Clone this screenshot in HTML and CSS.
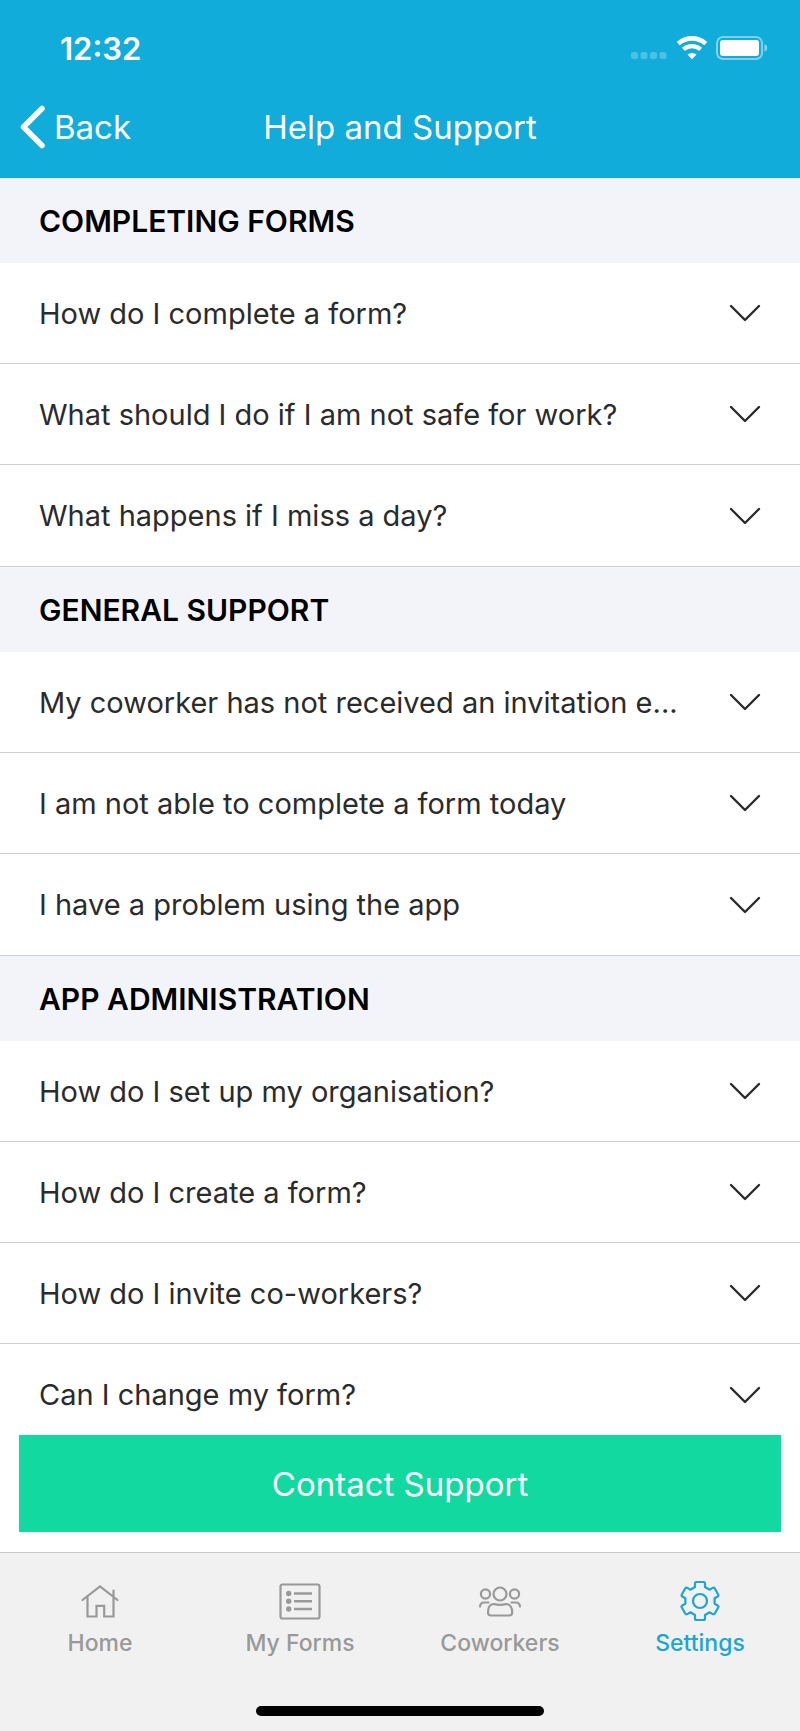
FILE: index.html
```html
<!DOCTYPE html>
<html lang="en">
<head>
<meta charset="utf-8">
<meta name="viewport" content="width=device-width, initial-scale=1">
<title>Help and Support</title>
<link rel="stylesheet" href="styles.css">
</head>
<body class="app">
<svg class="sprite" aria-hidden="true">
  <symbol id="chevron" viewBox="0 0 32 18"><path d="M2 2l14 14L30 2" fill="none" stroke="currentColor" stroke-width="2.400" stroke-linecap="round" stroke-linejoin="round"/></symbol>
</svg>
<header class="top">
  <div class="status">
    <span class="time">12:32</span>
    <div class="indicators">
      <svg class="cell" viewBox="0 0 38 24" fill="#fff" fill-opacity=".25"><rect x="1" y="16" width="7" height="7" rx="2"/><rect x="10.500" y="16" width="7" height="7" rx="2"/><rect x="20" y="16" width="7" height="7" rx="2"/><rect x="29.500" y="16" width="7" height="7" rx="2"/></svg>
      <svg class="wifi" viewBox="0 0 32 24" fill="none" stroke="#fff"><path d="M2.300 7.600a20.500 20.500 0 0 1 27.400 0" stroke-width="4.600"/><path d="M7.400 13.400a13 13 0 0 1 17.200 0" stroke-width="4.200"/><path d="M11.500 18.600a6.800 6.800 0 0 1 9 0L16 23.300z" fill="#fff" stroke="none"/></svg>
      <svg class="battery" viewBox="0 0 52 24"><rect x="1" y="1" width="45" height="22" rx="6" fill="none" stroke="#fff" stroke-opacity=".45" stroke-width="2"/><rect x="4" y="4" width="39" height="16" rx="3" fill="#fff"/><path d="M48.500 8a4.300 4.300 0 0 1 0 8z" fill="#fff" fill-opacity=".5"/></svg>
    </div>
  </div>
  <div class="navbar">
    <button class="back" type="button"><svg class="back-icon" viewBox="0 0 26 44"><path d="M22 3.500L3.500 22 22 40.500" fill="none" stroke="#fff" stroke-width="5.500" stroke-linecap="round" stroke-linejoin="round"/></svg>Back</button>
    <h1 class="title">Help and Support</h1>
  </div>
</header>
<main class="faq">
  <section class="group">
    <h2 class="group-title">COMPLETING FORMS</h2>
    <button class="row" type="button"><span class="question">How do I complete a form?</span><svg class="chevron"><use href="#chevron"/></svg></button>
    <button class="row" type="button"><span class="question">What should I do if I am not safe for work?</span><svg class="chevron"><use href="#chevron"/></svg></button>
    <button class="row" type="button"><span class="question">What happens if I miss a day?</span><svg class="chevron"><use href="#chevron"/></svg></button>
  </section>
  <section class="group">
    <h2 class="group-title">GENERAL SUPPORT</h2>
    <button class="row" type="button"><span class="question">My coworker has not received an invitation e...</span><svg class="chevron"><use href="#chevron"/></svg></button>
    <button class="row" type="button"><span class="question">I am not able to complete a form today</span><svg class="chevron"><use href="#chevron"/></svg></button>
    <button class="row" type="button"><span class="question">I have a problem using the app</span><svg class="chevron"><use href="#chevron"/></svg></button>
  </section>
  <section class="group">
    <h2 class="group-title">APP ADMINISTRATION</h2>
    <button class="row" type="button"><span class="question">How do I set up my organisation?</span><svg class="chevron"><use href="#chevron"/></svg></button>
    <button class="row" type="button"><span class="question">How do I create a form?</span><svg class="chevron"><use href="#chevron"/></svg></button>
    <button class="row" type="button"><span class="question">How do I invite co-workers?</span><svg class="chevron"><use href="#chevron"/></svg></button>
    <button class="row" type="button"><span class="question">Can I change my form?</span><svg class="chevron"><use href="#chevron"/></svg></button>
  </section>
</main>
<div class="action">
  <button class="contact" type="button">Contact Support</button>
</div>
<footer class="bottom">
  <nav class="tabs">
    <a class="tab" href="#home">
      <svg class="tab-icon" viewBox="0 0 48 48"><path d="M6.500 23L24 9.500 41.500 23M37.500 13.500v26h-9.300V28.800h-7.700v10.700h-9V20" stroke-linecap="round"/></svg>
      <span>Home</span>
    </a>
    <a class="tab" href="#forms">
      <svg class="tab-icon" viewBox="0 0 48 48"><rect x="4.500" y="7.500" width="39" height="34" rx="2"/><path d="M18 16.500h18M18 24.300h18M18 32h18" stroke-width="2.600"/><g fill="currentColor" stroke="none"><circle cx="12.700" cy="16.500" r="2.700"/><circle cx="12.700" cy="24.300" r="2.700"/><circle cx="12.700" cy="32" r="2.700"/></g></svg>
      <span>My Forms</span>
    </a>
    <a class="tab" href="#coworkers">
      <svg class="tab-icon" viewBox="0 0 48 48" stroke-linecap="round"><circle cx="24" cy="17" r="6.500"/><circle cx="9.500" cy="17" r="4.600"/><circle cx="38.500" cy="17" r="4.600"/><path d="M18 27q6 1.600 12 0c4 0 6.200 3.500 6.200 8.500 0 2-1 3-3 3H15c-2 0-3-1-3-3C12 30.500 14 27 18 27zM4 29.500c.3-2.500 1.600-4 4-4h4.500M44 29.500c-.3-2.500-1.600-4-4-4h-4.500"/></svg>
      <span>Coworkers</span>
    </a>
    <a class="tab tab-active" href="#settings" aria-current="page">
      <svg class="tab-icon" viewBox="0 0 48 48"><path d="M19 10V6.500Q19 5 20.500 5h7Q29 5 29 6.500V10L33.600 12.700 36.700 10.900Q38 10.200 38.800 11.500L42.200 17.500Q43 18.800 41.700 19.500L38.600 21.300V26.700L41.700 28.500Q43 29.200 42.200 30.500L38.800 36.500Q38 37.800 36.700 37.100L33.600 35.300 29 38V41.500Q29 43 27.500 43h-7Q19 43 19 41.500V38L14.400 35.300 11.300 37.100Q10 37.800 9.200 36.500L5.800 30.500Q5 29.200 6.300 28.500L9.400 26.700V21.300L6.300 19.500Q5 18.800 5.800 17.500L9.200 11.500Q10 10.200 11.300 10.900L14.400 12.700z" stroke-linejoin="round"/><circle cx="24" cy="24" r="7"/></svg>
      <span>Settings</span>
    </a>
  </nav>
  <div class="home-bar"></div>
</footer>
</body>
</html>
```
FILE: styles.css
```css
* {
  box-sizing: border-box;
}

.app {
  display: flex;
  flex-direction: column;
  height: 100vh;
  margin: 0;
  background: #fff;
  color: #2b2b2b;
  font-family: Inter, "Liberation Sans", sans-serif;
}

.sprite {
  display: none;
}

button {
  margin: 0;
  border: 0;
  padding: 0;
  background: none;
  color: inherit;
  font: inherit;
}

.top {
  flex: none;
  padding-top: 24px;
  background: #11acda;
  color: #fff;
}

.status {
  display: flex;
  align-items: center;
  justify-content: space-between;
  height: 48px;
  padding: 0 32px 0 60px;
}

.time {
  font-size: 31px;
  font-weight: 600;
}

.indicators {
  display: flex;
  gap: 8px;
}

.cell {
  width: 38px;
  height: 24px;
}

.wifi {
  width: 32px;
  height: 24px;
}

.battery {
  width: 52px;
  height: 24px;
}

.navbar {
  display: grid;
  grid-template-columns: 1fr auto 1fr;
  align-items: center;
  height: 106px;
  padding: 4px 20px 0;
}

.back {
  display: flex;
  align-items: center;
  justify-self: start;
  gap: 8px;
  font-size: 33px;
}

.back-icon {
  width: 26px;
  height: 44px;
}

.title {
  margin: 0;
  font-size: 33px;
  font-weight: 400;
}

.faq {
  flex: 1;
  min-height: 0;
  overflow: hidden;
}

.group-title {
  display: flex;
  align-items: center;
  height: 85px;
  margin: 0;
  padding: 0 39px;
  background: #f3f4f9;
  color: #000;
  font-size: 30px;
  font-weight: 600;
}

.row {
  display: flex;
  align-items: center;
  justify-content: space-between;
  gap: 24px;
  width: 100%;
  height: 101px;
  padding: 0 39px;
  border-bottom: 1px solid #cfcfd1;
  font-size: 29px;
  text-align: left;
}

.row:last-child {
  height: 102px;
}

.question {
  min-width: 0;
  overflow: hidden;
  text-overflow: ellipsis;
  white-space: nowrap;
}

.chevron {
  flex: none;
  width: 32px;
  height: 18px;
}

.action {
  flex: none;
  padding: 0 19px 20px;
}

.contact {
  width: 100%;
  height: 97px;
  background: #12d9a0;
  color: #fff;
  font-size: 33px;
}

.bottom {
  flex: none;
  display: flex;
  flex-direction: column;
  align-items: center;
  justify-content: space-between;
  height: 179px;
  padding: 24px 0 15px;
  border-top: 1px solid #cacaca;
  background: #f1f1f1;
}

.tabs {
  display: grid;
  grid-template-columns: repeat(4, 1fr);
  width: 100%;
}

.tab {
  display: flex;
  flex-direction: column;
  align-items: center;
  gap: 4px;
  color: #999;
  font-size: 23px;
  font-weight: 500;
  line-height: 28px;
  text-decoration: none;
}

.tab-active {
  color: #1fa5d1;
}

.tab-icon {
  width: 48px;
  height: 48px;
  fill: none;
  stroke: currentColor;
  stroke-width: 2.2px;
}

.home-bar {
  width: 36%;
  height: 10px;
  border-radius: 5px;
  background: #000;
}
```
